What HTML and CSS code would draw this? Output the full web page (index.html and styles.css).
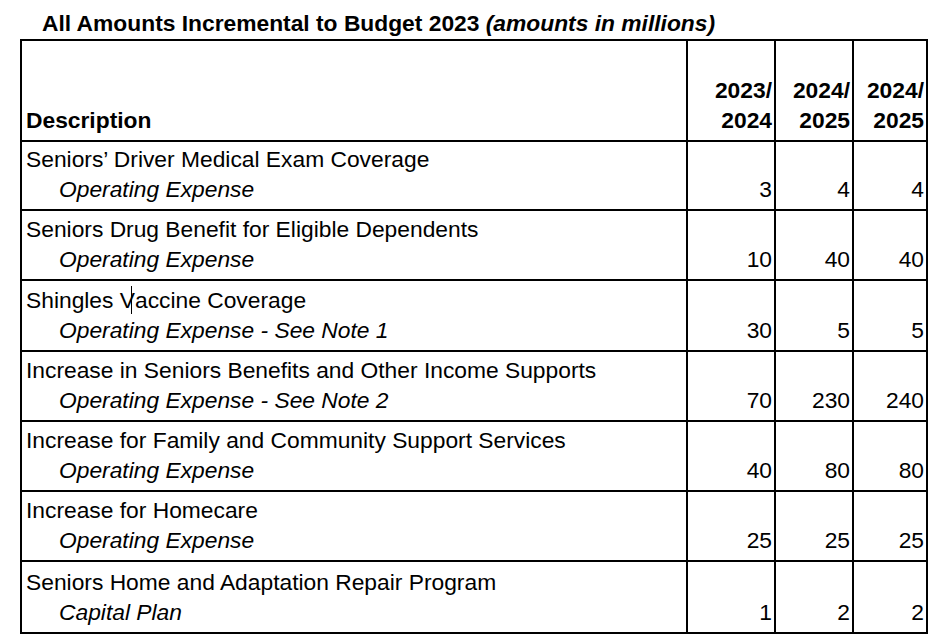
FILE: index.html
```html
<!DOCTYPE html>
<html>
<head>
<meta charset="utf-8">
<link rel="stylesheet" href="styles.css">
</head>
<body>
<div class="page">
  <h1 class="title">All Amounts Incremental to Budget 2023 <em>(amounts in millions)</em></h1>
  <table class="budget">
    <colgroup>
      <col class="c-desc"><col class="c-y1"><col class="c-y2"><col class="c-y3">
    </colgroup>
    <thead>
      <tr class="r-head">
        <th class="desc">Description</th>
        <th class="num">2023/<br>2024</th>
        <th class="num">2024/<br>2025</th>
        <th class="num">2024/<br>2025</th>
      </tr>
    </thead>
    <tbody>
      <tr class="r-69">
        <td class="desc">Seniors’ Driver Medical Exam Coverage<br><span class="sub">Operating Expense</span></td>
        <td class="num">3</td><td class="num">4</td><td class="num">4</td>
      </tr>
      <tr class="r-70">
        <td class="desc">Seniors Drug Benefit for Eligible Dependents<br><span class="sub">Operating Expense</span></td>
        <td class="num">10</td><td class="num">40</td><td class="num">40</td>
      </tr>
      <tr class="r-71">
        <td class="desc">Shingles V<span class="caret"></span>accine Coverage<br><span class="sub">Operating Expense - See Note 1</span></td>
        <td class="num">30</td><td class="num">5</td><td class="num">5</td>
      </tr>
      <tr class="r-70">
        <td class="desc">Increase in Seniors Benefits and Other Income Supports<br><span class="sub">Operating Expense - See Note 2</span></td>
        <td class="num">70</td><td class="num">230</td><td class="num">240</td>
      </tr>
      <tr class="r-70">
        <td class="desc">Increase for Family and Community Support Services<br><span class="sub">Operating Expense</span></td>
        <td class="num">40</td><td class="num">80</td><td class="num">80</td>
      </tr>
      <tr class="r-70">
        <td class="desc">Increase for Homecare<br><span class="sub">Operating Expense</span></td>
        <td class="num">25</td><td class="num">25</td><td class="num">25</td>
      </tr>
      <tr class="r-72">
        <td class="desc">Seniors Home and Adaptation Repair Program<br><span class="sub">Capital Plan</span></td>
        <td class="num">1</td><td class="num">2</td><td class="num">2</td>
      </tr>
    </tbody>
  </table>
</div>
</body>
</html>
```

FILE: styles.css
```css
html, body {
  margin: 0;
  padding: 0;
  background: #ffffff;
}

body {
  font-family: "Liberation Sans", Arial, sans-serif;
  color: #000000;
}

.page {
  padding: 8px 0 0 20px;
}

.title {
  margin: 0 0 1px 22px;
  font-size: 22.8px;
  line-height: 30px;
  font-weight: bold;
  white-space: nowrap;
  height: 30px;
}

.title em {
  font-style: italic;
}

.budget {
  border-collapse: collapse;
  table-layout: fixed;
  width: 908px;
  font-size: 22.8px;
  line-height: 30px;
}

.c-desc { width: 666px; }
.c-y1 { width: 88px; }
.c-y2 { width: 78px; }
.c-y3 { width: 74px; }

.budget th,
.budget td {
  border: 2px solid #000000;
  vertical-align: bottom;
  padding: 0 2px 5px 4px;
  white-space: nowrap;
}

.budget th {
  font-weight: bold;
}

.budget .desc {
  text-align: left;
}

.budget .num {
  text-align: right;
}

.r-head { height: 101px; }
.r-69 { height: 69px; }
.r-70 { height: 70px; }
.r-71 { height: 71px; }
.r-72 { height: 72px; }

.sub {
  font-style: italic;
  padding-left: 33px;
}

.caret {
  display: inline-block;
  width: 0;
  height: 28px;
  border-left: 1px solid #000000;
  margin-left: -4px;
  margin-right: 3px;
  vertical-align: -6px;
}
```
